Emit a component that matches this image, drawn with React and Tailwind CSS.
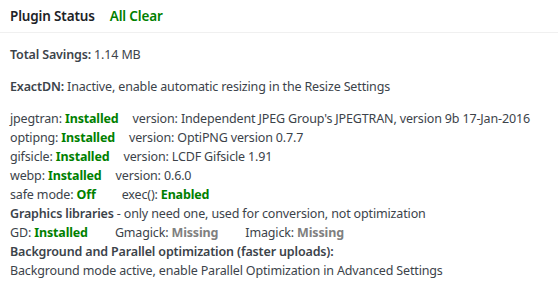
import React from 'react';

const Ok = ({ children }) => <span className="font-bold text-[#008000]">{children}</span>;
const Miss = ({ children }) => <span className="font-bold text-[#808080]">{children}</span>;
const Label = ({ children }) => <span className="font-semibold text-[#3c434a]">{children}</span>;

const tools = [
  ['jpegtran', "Independent JPEG Group's JPEGTRAN, version 9b 17-Jan-2016"],
  ['optipng', 'OptiPNG version 0.7.7'],
  ['gifsicle', 'LCDF Gifsicle 1.91'],
  ['webp', '0.6.0'],
];

const App = () => {
  return (
    <div className="w-[558px] h-[300px] bg-white text-[12.5px] tracking-[-0.15px] leading-[19px] text-[#3c434a] font-['Noto_Sans',sans-serif]">
      <div className="h-[33px] flex items-center gap-[15px] px-[10px] border-b border-[#f0f0f0] text-[13.5px]">
        <span className="font-semibold text-[#1d2327]">Plugin Status</span>
        <span className="font-semibold text-[#008000]">All Clear</span>
      </div>
      <div className="px-[10px] pt-[12px]">
        <p>
          <Label>Total Savings:</Label> 1.14 MB
        </p>
        <p className="mt-[13px]">
          <Label>ExactDN:</Label> Inactive, enable automatic resizing in the Resize Settings
        </p>
        <div className="mt-[13px] whitespace-nowrap">
          {tools.map(([name, ver]) => (
            <div key={name}>
              {name}: <Ok>Installed</Ok>
              <span className="ml-[14px]">version: {ver}</span>
            </div>
          ))}
          <div>
            safe mode: <Ok>Off</Ok>
            <span className="ml-[26px]">exec(): <Ok>Enabled</Ok></span>
          </div>
          <div>
            <Label>Graphics libraries</Label> - only need one, used for conversion, not optimization
          </div>
          <div>
            GD: <Ok>Installed</Ok>
            <span className="ml-[27px]">Gmagick: <Miss>Missing</Miss></span>
            <span className="ml-[27px]">Imagick: <Miss>Missing</Miss></span>
          </div>
          <div>
            <Label>Background and Parallel optimization (faster uploads):</Label>
          </div>
          <div>Background mode active, enable Parallel Optimization in Advanced Settings</div>
        </div>
      </div>
    </div>
  );
};

export default App;
